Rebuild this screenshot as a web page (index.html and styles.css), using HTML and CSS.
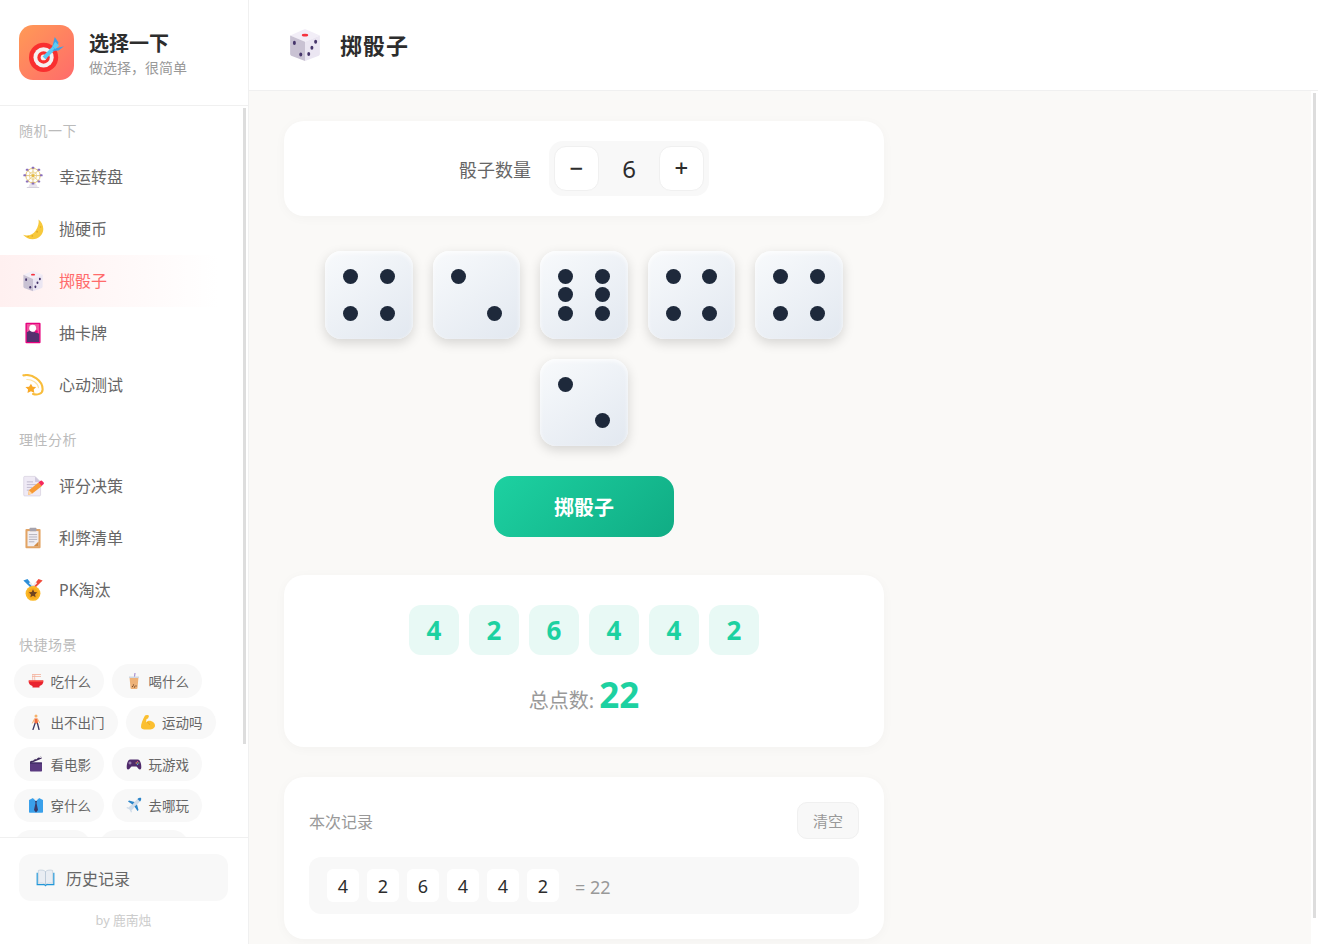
FILE: index.html
```html
<!DOCTYPE html>
<html lang="zh-CN">
<head>
<meta charset="utf-8">
<title>选择一下</title>
<link rel="stylesheet" href="styles.css">
</head>
<body>
<svg class="defs" aria-hidden="true">
  <symbol id="i-target" viewBox="0 0 36 36">
    <circle cx="15" cy="21" r="15" fill="#f92f2f"/><circle cx="15" cy="21" r="10.400" fill="#f5f0f0"/><circle cx="15" cy="21" r="6.400" fill="#f92f2f"/><circle cx="15" cy="21" r="3" fill="#f5f0f0"/>
    <path d="M14 20 26 8l3 3-12 12z" fill="#5ccbf5"/><path d="M24 10 26.500 0l4 6-4 6z" fill="#3f9fe6"/><path d="M26 12 36 9.500l-5.500 4.500-6.500.5z" fill="#3f9fe6"/><path d="M27 5 31 9 27 12 24 10z" fill="#5ccbf5"/>
  </symbol>
  <symbol id="i-wheel" viewBox="0 0 32 32">
    <path d="M9 31h14l-4-8h-6z" fill="#e8e4ee"/><path d="M7 30.500h18V32H7z" fill="#d5d0dd"/>
    <circle cx="16" cy="14" r="10.500" fill="none" stroke="#e8c66a" stroke-width="1.400"/>
    <path d="M16 2v24M4 14h24M7.500 5.500l17 17M24.500 5.500l-17 17" stroke="#d9b85a" stroke-width="1.100"/><circle cx="16" cy="14" r="5.500" fill="none" stroke="#eecf80" stroke-width="1.100"/><circle cx="16" cy="14" r="2" fill="#e8b93a"/>
    <g fill="#8a6fbb"><rect x="14" y="1" width="4" height="3" rx="1"/><rect x="14" y="24" width="4" height="3" rx="1"/><rect x="2" y="12" width="4" height="3" rx="1"/><rect x="26" y="12" width="4" height="3" rx="1"/><rect x="5.500" y="4" width="4" height="3" rx="1"/><rect x="22.500" y="4" width="4" height="3" rx="1"/><rect x="5.500" y="21" width="4" height="3" rx="1"/><rect x="22.500" y="21" width="4" height="3" rx="1"/></g>
  </symbol>
  <symbol id="i-moon" viewBox="0 0 32 32">
    <path d="M24 2c4 3 7 8 7 14 0 8.500-7 15-15.500 15C9.500 31 5 28.500 1.500 24.500c7 2 14 .5 18.500-6.500 3.500-5.500 5-11 4-16z" fill="#f7c93c"/><circle cx="22" cy="20" r="1.400" fill="#e5ab25"/><circle cx="15" cy="26" r="1.300" fill="#e5ab25"/><circle cx="27" cy="13" r="1.100" fill="#e5ab25"/><circle cx="9" cy="27" r="1.100" fill="#e5ab25"/>
  </symbol>
  <symbol id="i-dice" viewBox="0 0 32 32">
    <path d="M16 1 30 7 16 13 2 7z" fill="#f2eef7"/><path d="M2 7l14 6v18L3 26c-.6-.3-1-.8-1-1.500z" fill="#c9c2d3"/><path d="M30 7 16 13v18l13-5c.6-.3 1-.8 1-1.500z" fill="#ebe6f2"/>
    <ellipse cx="16" cy="6.800" rx="3" ry="1.300" fill="#f5333f"/>
    <g fill="#46356b"><ellipse cx="6" cy="14" rx="1.400" ry="1.900"/><ellipse cx="12" cy="25" rx="1.400" ry="1.900"/><ellipse cx="26" cy="13" rx="1.400" ry="1.900"/><ellipse cx="22.500" cy="18.500" rx="1.400" ry="1.900"/><ellipse cx="19.500" cy="24.500" rx="1.400" ry="1.900"/></g>
  </symbol>
  <symbol id="i-card" viewBox="0 0 32 32">
    <rect x="5" y="1" width="22" height="30" rx="1.500" fill="#e6007e"/><rect x="7" y="3" width="18" height="26" fill="#f0559f"/><path d="M7 29V15l5-3 4 3 3-1 6 3v12z" fill="#55306f"/><circle cx="15.500" cy="9" r="5" fill="#fff"/><circle cx="21" cy="14" r="2" fill="#e6007e"/>
  </symbol>
  <symbol id="i-dizzy" viewBox="0 0 32 32">
    <path d="M2 2c13-3 28 8 28 20 0 7-8 9-14 7" fill="none" stroke="#f8bd3c" stroke-width="3" stroke-linecap="round"/><path d="M7 8c8 0 16 5 17 12" fill="none" stroke="#fde3a0" stroke-width="1.600" stroke-linecap="round"/>
    <path d="m13 14 2.500 4.500 5 .5-3.500 3.500 1 5-5-2.500-5 2.500 .8-5-3.800-3.500 5.300-.5z" fill="#f9a825"/>
  </symbol>
  <symbol id="i-memo" viewBox="0 0 32 32">
    <path d="M4 2h15l8 8v19a1.500 1.500 0 0 1-1.500 1.500H4A1.500 1.500 0 0 1 2.500 29V3.500A1.500 1.500 0 0 1 4 2z" fill="#efeaf5" stroke="#cbc4d6" stroke-width=".8"/><path d="M19 2v8h8z" fill="#cfc8dc"/>
    <path d="M7 10h9M7 14h14M7 18h8M7 22h5" stroke="#b6afc6" stroke-width="1.200"/><path d="m10 22 14-11 5 5-14 11-6 2z" fill="#f79a34"/><path d="m24 11 3-2.500a1.500 1.500 0 0 1 2 0l2.500 2.500a1.500 1.500 0 0 1 0 2l-3 3z" fill="#f5285c"/><path d="m10 22-1 7 6-2z" fill="#ffd8a8"/>
  </symbol>
  <symbol id="i-clip" viewBox="0 0 32 32">
    <rect x="5" y="3" width="22" height="28" rx="1.500" fill="#e2a465"/><rect x="8" y="6" width="16" height="22" fill="#f1eff3"/><path d="M17 28h7v-7z" fill="#d28c44"/><rect x="11" y="1" width="10" height="5" rx="1" fill="#a6a3ad"/><path d="M10 11h12M10 14.500h12M10 18h12M10 21.500h8" stroke="#a9a6b2" stroke-width="1.200"/>
  </symbol>
  <symbol id="i-medal" viewBox="0 0 32 32">
    <path d="M2 2 12 12l4-2L8 0z" fill="#2f8fd8"/><path d="M30 2 20 12l-4-2 8-10z" fill="#f04b3c"/><path d="M12 4l4 6 4-6 2 2-6 6-6-6z" fill="#f0f0f0"/>
    <circle cx="16" cy="21" r="10.800" fill="#fbb827"/><circle cx="16" cy="21" r="7.800" fill="#f7a91c"/><path d="m16 15 1.900 3.900 4.200.5-3.100 3 .8 4.200-3.800-2.100-3.800 2.100.8-4.200-3.100-3 4.200-.5z" fill="#6e4420"/>
  </symbol>
  <symbol id="i-ramen" viewBox="0 0 32 32">
    <path d="M8 3h18M8 7h18M10 3c-1 3-1 8 0 13M14 3c-1 3-1 8 0 13" fill="none" stroke="#f4b09a" stroke-width="1.600"/><path d="M1 15h30c0 6-3 10-8 11v3H9v-3C4 25 1 21 1 15z" fill="#e8232f"/><path d="M2 15h28v3H2z" fill="#f8453d"/>
  </symbol>
  <symbol id="i-boba" viewBox="0 0 32 32">
    <path d="M17 0h2l-1 8h-2z" fill="#9a7ec8"/><path d="M7 8h18l-2 22a2 2 0 0 1-2 2H11a2 2 0 0 1-2-2z" fill="#eeb278"/><path d="M6 7h20v3H6z" fill="#cfd6e2"/><g fill="#7d5230"><circle cx="13" cy="27" r="1.300"/><circle cx="17" cy="28" r="1.300"/><circle cx="20" cy="26" r="1.300"/><circle cx="15" cy="24" r="1.300"/></g>
  </symbol>
  <symbol id="i-walk" viewBox="0 0 32 32">
    <circle cx="16" cy="4" r="3" fill="#f6b26b"/><path d="M13 9h6l1 10h-7z" fill="#f26a3c"/><path d="M13 10l-4 8M19 10l4 7" stroke="#f6b26b" stroke-width="2" stroke-linecap="round"/><path d="M14 19l-4 12M19 19l3 12" stroke="#3e3a63" stroke-width="2.600" stroke-linecap="round"/>
  </symbol>
  <symbol id="i-flex" viewBox="0 0 32 32">
    <path d="M10 3c3-2 7-1 8 1l-2 5-3 1-1 7c2-3 6-4 10-3 5 1 8 5 8 9 0 5-5 8-12 8H9c-4 0-7-2-7-5 0-6 3-14 8-23z" fill="#fbbf30"/><path d="M14 17c3 0 5 2 5 5" fill="none" stroke="#e89a14" stroke-width="1.200"/>
  </symbol>
  <symbol id="i-clap" viewBox="0 0 32 32">
    <rect x="4" y="13" width="24" height="18" rx="1.500" fill="#5a3a80"/><path d="M4 11 26 1l1.500 4L4 15z" fill="#3e2a5c"/><path d="m8 10 2-5 3-1-2 5zm7-3 2-5 3-1-2 5zm7-3 2-3 3 1-2 2z" fill="#eee"/><rect x="4" y="13" width="24" height="3" fill="#45306a"/>
  </symbol>
  <symbol id="i-pad" viewBox="0 0 32 32">
    <path d="M9 7h14c4 0 6 4 7 9 1 6 1 11-2 11-3 0-4-4-7-6H11c-3 2-4 6-7 6-3 0-3-5-2-11 1-5 3-9 7-9z" fill="#4f2a6b"/><path d="M8 11v6M5 14h6" stroke="#c6b3d8" stroke-width="1.600"/><circle cx="23" cy="11.500" r="1.300" fill="#f05a78"/><circle cx="23" cy="16.500" r="1.300" fill="#5bc0eb"/><circle cx="20.500" cy="14" r="1.300" fill="#f9c74f"/><circle cx="25.500" cy="14" r="1.300" fill="#8bd36a"/>
  </symbol>
  <symbol id="i-shirt" viewBox="0 0 32 32">
    <path d="M10 2 2 6v24a1.500 1.500 0 0 0 1.500 1.500h25A1.500 1.500 0 0 0 30 30V6l-8-4-6 5z" fill="#3aa0ea"/><path d="M10 2h12l-6 6z" fill="#f2f2f2"/><path d="M14 8h4l-1 4 3 14-4 5-4-5 3-14z" fill="#3a3a66"/>
  </symbol>
  <symbol id="i-plane" viewBox="0 0 32 32">
    <path d="M30 2c-2-1-5 0-7 2L5 21l-3-1-1 2 6 3 3 6 2-1-1-3L28 9c2-2 3-5 2-7z" fill="#cfdcea"/><path d="M17 10 6 7 4 9l9 6zM22 15l3 11-2 2-6-9z" fill="#2b85c9"/><path d="M30 2c-2-1-5 0-7 2l5 5c2-2 3-5 2-7z" fill="#2b85c9"/>
  </symbol>
  <symbol id="i-book" viewBox="0 0 32 32">
    <path d="M1 8v21h12c1 0 2 1 3 2 1-1 2-2 3-2h12V8h-2v19H3V8z" fill="#1f97d9"/><path d="M4 4c4-1 9-1 12 2 3-3 8-3 12-2v22c-4-1-9-1-12 2-3-3-8-3-12-2z" fill="#e9edf3" stroke="#9fb3c8" stroke-width=".7"/><path d="M16 6v22" stroke="#9fb3c8" stroke-width="1"/>
  </symbol>
</svg>

<div class="app">
  <aside class="sidebar">
    <header class="brand">
      <div class="logo"><svg class="logo-ico"><use href="#i-target"/></svg></div>
      <div class="brand-text">
        <div class="brand-title">选择一下</div>
        <div class="brand-sub">做选择，很简单</div>
      </div>
    </header>
    <div class="nav-wrap">
      <nav class="nav">
        <div class="nav-label first">随机一下</div>
        <a class="nav-item"><svg class="nav-ico"><use href="#i-wheel"/></svg>幸运转盘</a>
        <a class="nav-item"><svg class="nav-ico"><use href="#i-moon"/></svg>抛硬币</a>
        <a class="nav-item active"><svg class="nav-ico"><use href="#i-dice"/></svg>掷骰子</a>
        <a class="nav-item"><svg class="nav-ico"><use href="#i-card"/></svg>抽卡牌</a>
        <a class="nav-item"><svg class="nav-ico"><use href="#i-dizzy"/></svg>心动测试</a>
        <div class="nav-label">理性分析</div>
        <a class="nav-item"><svg class="nav-ico"><use href="#i-memo"/></svg>评分决策</a>
        <a class="nav-item"><svg class="nav-ico"><use href="#i-clip"/></svg>利弊清单</a>
        <a class="nav-item"><svg class="nav-ico"><use href="#i-medal"/></svg>PK淘汰</a>
        <div class="nav-label">快捷场景</div>
        <div class="chips">
          <a class="chip"><svg class="chip-ico"><use href="#i-ramen"/></svg>吃什么</a>
          <a class="chip"><svg class="chip-ico"><use href="#i-boba"/></svg>喝什么</a>
          <a class="chip"><svg class="chip-ico"><use href="#i-walk"/></svg>出不出门</a>
          <a class="chip"><svg class="chip-ico"><use href="#i-flex"/></svg>运动吗</a>
          <a class="chip"><svg class="chip-ico"><use href="#i-clap"/></svg>看电影</a>
          <a class="chip"><svg class="chip-ico"><use href="#i-pad"/></svg>玩游戏</a>
          <a class="chip"><svg class="chip-ico"><use href="#i-shirt"/></svg>穿什么</a>
          <a class="chip"><svg class="chip-ico"><use href="#i-plane"/></svg>去哪玩</a>
          <a class="chip"><svg class="chip-ico"><use href="#i-moon"/></svg>睡觉</a>
          <a class="chip"><svg class="chip-ico"><use href="#i-book"/></svg>买什么</a>
        </div>
      </nav>
      <div class="scroll-track side-track"><div class="scroll-thumb side-thumb"></div></div>
    </div>
    <footer class="side-foot">
      <a class="history"><svg class="history-ico"><use href="#i-book"/></svg>历史记录</a>
      <div class="credit">by 鹿南烛</div>
    </footer>
  </aside>

  <div class="page">
    <header class="topbar">
      <svg class="top-ico"><use href="#i-dice"/></svg>
      <h1 class="top-title">掷骰子</h1>
    </header>
    <div class="main-wrap">
      <main class="main">
        <div class="content">
          <section class="card count-card">
            <span class="count-label">骰子数量</span>
            <div class="stepper">
              <button class="step-btn">−</button>
              <span class="step-val">6</span>
              <button class="step-btn">+</button>
            </div>
          </section>

          <div class="dice">
            <div class="die"><i class="pip r1 c1"></i><i class="pip r1 c3"></i><i class="pip r3 c1"></i><i class="pip r3 c3"></i></div>
            <div class="die"><i class="pip r1 c1"></i><i class="pip r3 c3"></i></div>
            <div class="die"><i class="pip r1 c1"></i><i class="pip r1 c3"></i><i class="pip r2 c1"></i><i class="pip r2 c3"></i><i class="pip r3 c1"></i><i class="pip r3 c3"></i></div>
            <div class="die"><i class="pip r1 c1"></i><i class="pip r1 c3"></i><i class="pip r3 c1"></i><i class="pip r3 c3"></i></div>
            <div class="die"><i class="pip r1 c1"></i><i class="pip r1 c3"></i><i class="pip r3 c1"></i><i class="pip r3 c3"></i></div>
            <div class="die"><i class="pip r1 c1"></i><i class="pip r3 c3"></i></div>
          </div>

          <button class="roll">掷骰子</button>

          <section class="card result-card">
            <div class="results">
              <span class="res">4</span><span class="res">2</span><span class="res">6</span><span class="res">4</span><span class="res">4</span><span class="res">2</span>
            </div>
            <div class="total">总点数: <strong class="total-num">22</strong></div>
          </section>

          <section class="card log-card">
            <div class="log-head">
              <span class="log-title">本次记录</span>
              <button class="clear">清空</button>
            </div>
            <div class="log-row">
              <span class="log-n">4</span><span class="log-n">2</span><span class="log-n">6</span><span class="log-n">4</span><span class="log-n">4</span><span class="log-n">2</span>
              <span class="log-sum">= 22</span>
            </div>
          </section>
        </div>
      </main>
      <div class="scroll-track main-track"><div class="scroll-thumb main-thumb"></div></div>
    </div>
  </div>
</div>
</body>
</html>
```
FILE: styles.css
```css
* { box-sizing: border-box; }
html, body { height: 100%; margin: 0; }
body {
  font-family: "Noto Sans", "Noto Sans CJK SC", sans-serif;
  color: #2d2d2d;
  background: #faf9f7;
  overflow: hidden;
}
.defs { position: absolute; width: 0; height: 0; }
button { font-family: inherit; cursor: pointer; }

.app { display: flex; height: 100vh; }

/* sidebar */
.sidebar {
  width: 249px;
  flex: none;
  display: flex;
  flex-direction: column;
  background: #fff;
  border-right: 1px solid #f0f0f0;
}
.brand {
  height: 106px;
  flex: none;
  display: flex;
  align-items: center;
  gap: 15px;
  padding: 0 19px;
  border-bottom: 1px solid #f0f0f0;
}
.logo {
  width: 55px;
  height: 55px;
  border-radius: 14px;
  background: linear-gradient(135deg, #ff9a56, #ff6b6b);
  display: flex;
  align-items: center;
  justify-content: center;
  padding-top: 4px;
}
.logo-ico { width: 35px; height: 35px; }
.brand-text { padding-top: 2px; }
.brand-title { font-size: 20px; font-weight: 700; line-height: 27px; color: #2d2d2d; }
.brand-sub { font-size: 14px; line-height: 19px; color: #999; margin-top: 1px; }

.nav-wrap { flex: 1; min-height: 0; display: flex; }
.nav { flex: 1; min-width: 0; overflow: hidden; }
.scroll-track { flex: none; background: #fff; }
.scroll-thumb { width: 3px; background: #ddd; }
.side-track { width: 6px; padding: 2px 0 0 1px; }
.side-thumb { height: 636px; }
.nav-label {
  font-size: 14px;
  letter-spacing: 0.5px;
  line-height: 19px;
  color: #bbb;
  padding: 0 19px;
  margin: 18.5px 0 11.5px;
}
.nav-label.first { margin-top: 14.5px; }
.nav-item {
  height: 52px;
  display: flex;
  align-items: center;
  gap: 15px;
  padding: 0 0 2px 22px;
  font-size: 16px;
  color: #666;
}
.nav-item.active {
  color: #ff6b6b;
  background: linear-gradient(90deg, #fff0f0, rgba(255, 240, 240, 0) 90%);
}
.nav-ico { width: 22px; height: 22px; flex: none; margin-top: 2px; }

.chips { display: flex; flex-wrap: wrap; gap: 8px; padding: 0 14px; margin-top: -1px; }
.chip {
  height: 33.5px;
  display: flex;
  align-items: center;
  gap: 6.5px;
  padding: 0 13px 0 14px;
  border-radius: 17px;
  background: #f8f8f8;
  font-size: 13.5px;
  color: #666;
}
.chip-ico { width: 16px; height: 16px; flex: none; }

.side-foot {
  height: 107px;
  flex: none;
  border-top: 1px solid #f0f0f0;
  padding: 16px 20px 0 19px;
}
.history {
  height: 47px;
  display: flex;
  align-items: center;
  gap: 11px;
  padding-left: 17px;
  border-radius: 12px;
  background: #f8f8f8;
  font-size: 16px;
  color: #666;
}
.history-ico { width: 19px; height: 19px; flex: none; }
.credit {
  text-align: center;
  font-size: 12.8px;
  line-height: 19px;
  color: #ccc;
  margin-top: 10px;
}

/* page */
.page { flex: 1; min-width: 0; display: flex; flex-direction: column; }
.topbar {
  height: 91px;
  flex: none;
  display: flex;
  align-items: center;
  gap: 18px;
  padding-left: 39px;
  background: #fff;
  border-bottom: 1px solid #f0f0f0;
}
.top-ico { width: 34px; height: 34px; flex: none; }
.top-title { margin: 0 0 2px; font-size: 22px; letter-spacing: 1px; font-weight: 700; color: #2d2d2d; }

.main-wrap { flex: 1; min-height: 0; display: flex; }
.main { flex: 1; min-width: 0; overflow: hidden; padding: 30px 35px; }
.main-track { width: 7px; padding: 2px 0 0 2px; }
.main-thumb { height: 825px; }
.content { width: 600px; }

.card {
  background: #fff;
  border-radius: 20px;
  box-shadow: 0 2px 12px rgba(0, 0, 0, 0.03);
}
.count-card {
  display: flex;
  align-items: center;
  justify-content: center;
  gap: 18px;
  padding: 20px;
}
.count-label { font-size: 18px; color: #666; }
.stepper {
  width: 160px;
  height: 55px;
  display: flex;
  align-items: center;
  justify-content: space-between;
  padding: 0 5px;
  border-radius: 14px;
  background: #f8f8f8;
}
.step-btn {
  width: 45px;
  height: 45px;
  padding: 0 0 3px;
  border: 1px solid #f0f0f0;
  border-radius: 12px;
  background: #fff;
  font-size: 24px;
  font-weight: 500;
  color: #2d2d2d;
}
.step-val { font-size: 24px; color: #2d2d2d; }

.dice {
  display: flex;
  flex-wrap: wrap;
  justify-content: center;
  gap: 20.2px 20px;
  margin: 35px 0 30px;
}
.die {
  width: 87.5px;
  height: 87.5px;
  display: grid;
  grid-template-columns: repeat(3, 15px);
  grid-template-rows: repeat(3, 15px);
  gap: 3.4px;
  justify-content: center;
  align-content: center;
  border-radius: 16px;
  background: linear-gradient(145deg, #f8fafc, #e2e8f0);
  box-shadow: 0 4px 12px rgba(0, 0, 0, 0.15), inset 0 2px 4px rgba(255, 255, 255, 0.8);
}
.pip { width: 15px; height: 15px; border-radius: 50%; background: #1e293b; }
.r1 { grid-row: 1; } .r2 { grid-row: 2; } .r3 { grid-row: 3; }
.c1 { grid-column: 1; } .c3 { grid-column: 3; }

.roll {
  display: block;
  width: 180px;
  height: 61px;
  margin: 0 auto 38px;
  border: 0;
  border-radius: 16px;
  background: linear-gradient(135deg, #1dd1a1, #10ac84);
  color: #fff;
  font-size: 20px;
  font-weight: 700;
}

.result-card { padding: 30px 0 0; height: 172px; }
.results { display: flex; justify-content: center; gap: 10px; }
.res {
  width: 50px;
  height: 50px;
  display: flex;
  align-items: center;
  justify-content: center;
  border-radius: 12px;
  background: #e8f9f5;
  color: #1dd1a1;
  font-size: 26px;
  font-weight: 700;
}
.total { text-align: center; font-size: 20px; color: #999; margin-top: 16px; }
.total-num { font-size: 35px; font-weight: 700; color: #1dd1a1; }

.log-card { margin-top: 30px; padding: 25px; height: 162px; }
.log-head { display: flex; align-items: center; justify-content: space-between; }
.log-title { font-size: 16px; color: #999; }
.clear {
  width: 62px;
  height: 37px;
  padding: 0;
  border: 1px solid #f0f0f0;
  border-radius: 10px;
  background: #f8f8f8;
  font-size: 15px;
  color: #999;
}
.log-row {
  display: flex;
  align-items: center;
  gap: 8px;
  height: 57px;
  margin-top: 18px;
  padding: 0 18px;
  border-radius: 12px;
  background: #f8f8f8;
}
.log-n {
  width: 32px;
  height: 33px;
  display: flex;
  align-items: center;
  justify-content: center;
  padding-top: 1px;
  border-radius: 6px;
  background: #fff;
  font-size: 18px;
  color: #2d2d2d;
}
.log-sum { margin: 2px 0 0 8px; font-size: 18px; color: #999; }
```
